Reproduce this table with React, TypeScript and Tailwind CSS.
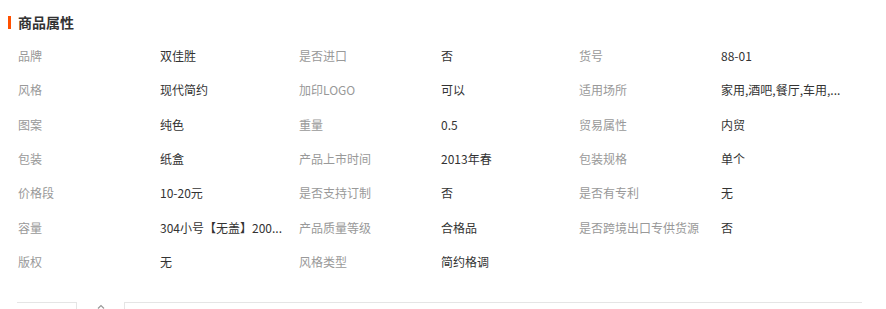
import React from 'react';

const attrs: [string, string][] = [
  ['品牌', '双佳胜'],
  ['是否进口', '否'],
  ['货号', '88-01'],
  ['风格', '现代简约'],
  ['加印LOGO', '可以'],
  ['适用场所', '家用,酒吧,餐厅,车用,...'],
  ['图案', '纯色'],
  ['重量', '0.5'],
  ['贸易属性', '内贸'],
  ['包装', '纸盒'],
  ['产品上市时间', '2013年春'],
  ['包装规格', '单个'],
  ['价格段', '10-20元'],
  ['是否支持订制', '否'],
  ['是否有专利', '无'],
  ['容量', '304小号【无盖】200...'],
  ['产品质量等级', '合格品'],
  ['是否跨境出口专供货源', '否'],
  ['版权', '无'],
  ['风格类型', '简约格调'],
];

const App = () => {
  return (
    <div className="w-[886px] h-[309px] overflow-hidden bg-white font-['Noto_Sans_CJK_SC',sans-serif] text-[12px]">
      {/* 标题 */}
      <div className="flex items-center pt-[14px] pl-[8px]">
        <span className="w-[3px] h-[13px] bg-[#ff5000]" />
        <h3 className="ml-[7px] text-[14px] leading-[16px] font-bold text-[#333]">商品属性</h3>
      </div>

      <div className="grid grid-cols-[281px_280px_280px] mt-[9px] pl-[18px]">
        {attrs.map(([label, value]) => (
          <div key={label} className="flex items-center h-[34.33px]">
            <span className="w-[142px] shrink-0 text-[#999] whitespace-nowrap">{label}</span>
            <span className="text-[#333] whitespace-nowrap">{value}</span>
          </div>
        ))}
      </div>

      {/* 底部收起 */}
      <div className="flex items-start mt-[23px] pl-[17px]">
        <div className="w-[60px] h-[10px] border-t border-r border-[#e5e5e5]" />
        <div className="w-[47px] flex justify-center pt-[2px]">
          <svg width="8" height="5" viewBox="0 0 8 5" fill="none">
            <path d="M1 4.5 L4 1.5 L7 4.5" stroke="#999" strokeWidth="1.2" />
          </svg>
        </div>
        <div className="w-[738px] h-[10px] border-t border-l border-[#e5e5e5]" />
      </div>
    </div>
  );
};

export default App;
